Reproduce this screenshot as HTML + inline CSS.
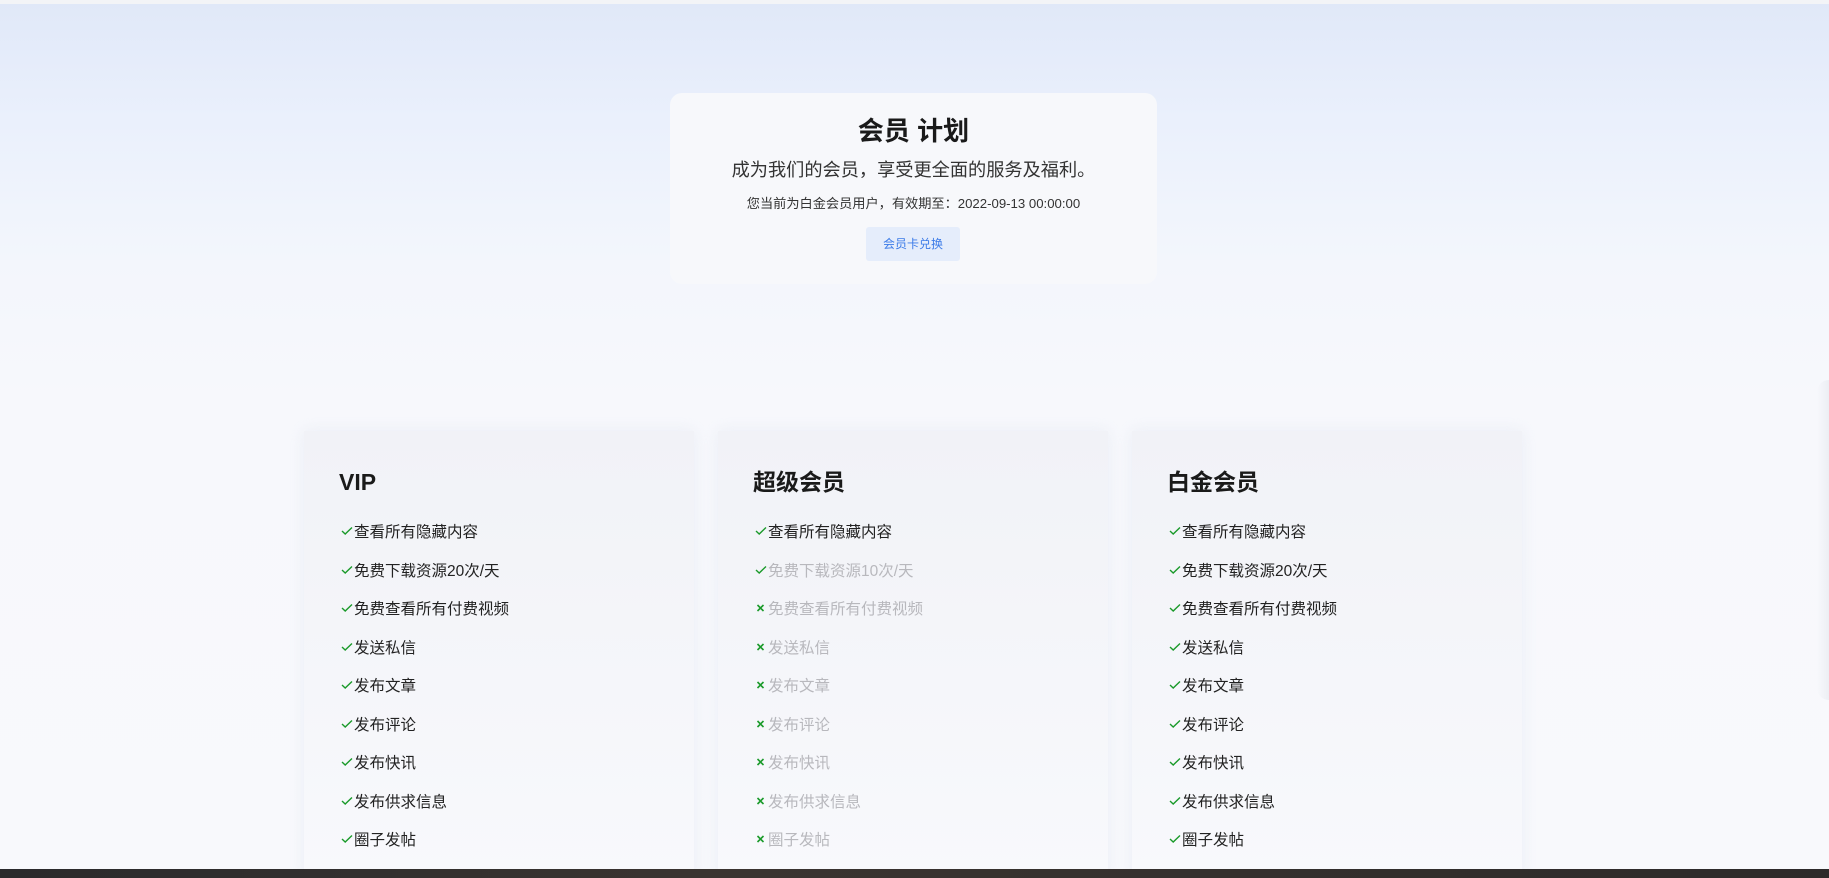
<!DOCTYPE html>
<html><head><meta charset="utf-8"><style>
*{margin:0;padding:0;box-sizing:border-box}
body{width:1829px;height:878px;overflow:hidden;position:relative;font-family:"Liberation Sans","Noto Sans CJK SC",sans-serif;background:linear-gradient(180deg,#e0e8f8 0px,#eaf0fc 120px,#f3f6fc 260px,#f7f8fc 400px,#f8f9fc 878px);color:#222}
.top{position:absolute;left:0;top:0;width:100%;height:4px;background:#f3f4f7}
.hero{position:absolute;left:670px;top:93px;width:487px;height:191px;background:#f7f8fb;border-radius:12px;text-align:center}
.hero h1{position:absolute;left:0;right:0;top:20px;font-size:26px;font-weight:bold;color:#1a1a1a;line-height:36px}
.hero .s1{position:absolute;left:0;right:0;top:64px;font-size:18.2px;color:#333;line-height:26px}
.hero .s2{position:absolute;left:0;right:0;top:102px;font-size:13.2px;color:#333;line-height:18px}
.btn{position:absolute;left:196px;top:134px;width:94px;height:34px;background:#e5edfb;border-radius:3px;color:#3b7be8;font-size:12px;line-height:34px}
.card{position:absolute;top:431px;width:390px;height:447px;background:linear-gradient(180deg,#f1f2f7,#f8f9fc);box-shadow:0 0 14px rgba(225,230,242,.6)}
.card h2{position:absolute;left:35px;top:36px;font-size:23px;font-weight:bold;color:#1a1a1a;line-height:30px}
.card ul{position:absolute;left:36px;top:83px;list-style:none}
.card li{font-size:15.5px;line-height:24px;color:#222;display:flex;align-items:center;height:38.5px}
.card li svg{width:14px;height:14px;position:relative;top:-2px}
.card li.off{color:#b8b8bd}
.bar{position:absolute;left:0;top:869px;width:100%;height:9px;background:linear-gradient(90deg,#2a2a2c,#3a3430 40%,#2d2a2a)}
.rs{position:absolute;right:0;top:380px;width:12px;height:320px;background:linear-gradient(90deg,rgba(230,232,238,0),rgba(225,228,235,.5));border-radius:14px 0 0 14px}
</style></head><body>
<div class="top"></div>
<div class="hero">
<h1>会员 计划</h1>
<div class="s1">成为我们的会员，享受更全面的服务及福利。</div>
<div class="s2">您当前为白金会员用户，有效期至：2022-09-13 00:00:00</div>
<div class="btn">会员卡兑换</div>
</div>
<svg width="0" height="0" style="position:absolute"><defs>
<symbol id="ok" viewBox="0 0 14 14"><path d="M2 7 L5.2 10 L12 3.5" fill="none" stroke="#1a9a2a" stroke-width="1.4"/></symbol>
<symbol id="no" viewBox="0 0 14 14"><path d="M3.5 4 L9.5 10 M9.5 4 L3.5 10" fill="none" stroke="#1a9a2a" stroke-width="1.6"/></symbol>
</defs></svg>
<div class="card" style="left:304px"><h2>VIP</h2><ul>
<li><svg><use href="#ok"/></svg>查看所有隐藏内容</li><li><svg><use href="#ok"/></svg>免费下载资源20次/天</li><li><svg><use href="#ok"/></svg>免费查看所有付费视频</li><li><svg><use href="#ok"/></svg>发送私信</li><li><svg><use href="#ok"/></svg>发布文章</li><li><svg><use href="#ok"/></svg>发布评论</li><li><svg><use href="#ok"/></svg>发布快讯</li><li><svg><use href="#ok"/></svg>发布供求信息</li><li><svg><use href="#ok"/></svg>圈子发帖</li></ul></div>
<div class="card" style="left:718px"><h2>超级会员</h2><ul>
<li><svg><use href="#ok"/></svg>查看所有隐藏内容</li><li class="off"><svg><use href="#ok"/></svg>免费下载资源10次/天</li><li class="off"><svg><use href="#no"/></svg>免费查看所有付费视频</li><li class="off"><svg><use href="#no"/></svg>发送私信</li><li class="off"><svg><use href="#no"/></svg>发布文章</li><li class="off"><svg><use href="#no"/></svg>发布评论</li><li class="off"><svg><use href="#no"/></svg>发布快讯</li><li class="off"><svg><use href="#no"/></svg>发布供求信息</li><li class="off"><svg><use href="#no"/></svg>圈子发帖</li></ul></div>
<div class="card" style="left:1132px"><h2>白金会员</h2><ul>
<li><svg><use href="#ok"/></svg>查看所有隐藏内容</li><li><svg><use href="#ok"/></svg>免费下载资源20次/天</li><li><svg><use href="#ok"/></svg>免费查看所有付费视频</li><li><svg><use href="#ok"/></svg>发送私信</li><li><svg><use href="#ok"/></svg>发布文章</li><li><svg><use href="#ok"/></svg>发布评论</li><li><svg><use href="#ok"/></svg>发布快讯</li><li><svg><use href="#ok"/></svg>发布供求信息</li><li><svg><use href="#ok"/></svg>圈子发帖</li></ul></div>
<div class="rs"></div>
<div class="bar"></div>
</body></html>
